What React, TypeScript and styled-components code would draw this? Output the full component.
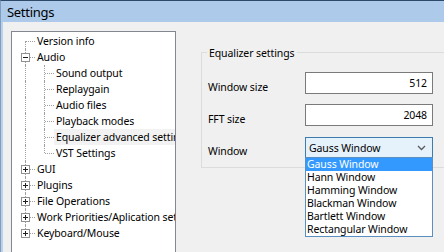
import React, { useState } from 'react';
import styled, { createGlobalStyle, css } from 'styled-components';

const GlobalStyle = createGlobalStyle`
  html, body {
    margin: 0;
    padding: 0;
    background: #f0f0f0;
  }
  body {
    font-family: 'Noto Sans', 'Open Sans', sans-serif;
    font-size: 10.5px;
    letter-spacing: -0.1px;
    color: #000000;
  }
`;

const Window = styled.div`
  width: 444px;
  height: 252px;
  overflow: hidden;
  display: flex;
  flex-direction: column;
  background: #f0f0f0;
  border-top: 1px solid #2e4a68;
  border-left: 1px solid #7f9dbd;
  box-sizing: border-box;
`;

const TitleBar = styled.div`
  height: 21px;
  flex: none;
  display: flex;
  align-items: center;
  padding: 1px 0 0 6px;
  box-sizing: border-box;
  background: #adcaea;
  font-size: 13px;
  letter-spacing: -0.3px;
  color: #000000;
`;

const Body = styled.div`
  flex: 1;
  display: flex;
  flex-direction: row;
  align-items: flex-start;
  gap: 25px;
  padding: 9px 0 0 8px;
  border-left: 2px solid #b9d1ea;
  min-height: 0;
`;

const TreeBox = styled.div`
  flex: none;
  width: 163px;
  height: 240px;
  background: #ffffff;
  border: 1px solid #828790;
  overflow: hidden;
  padding-top: 1px;
`;

const Row = styled.div`
  display: flex;
  align-items: center;
  height: 16px;
  padding-left: 4px;
  white-space: nowrap;
`;

const Cell = styled.div<{ $up?: boolean; $down?: boolean; $right?: boolean }>`
  position: relative;
  flex: none;
  width: 19px;
  height: 16px;

  ${({ $up, $down }) =>
    ($up || $down) &&
    css`
      &::before {
        content: '';
        position: absolute;
        left: 9px;
        top: ${$up ? '0' : '8px'};
        bottom: ${$down ? '0' : '8px'};
        border-left: 1px dotted #a0a0a0;
      }
    `}

  ${({ $right }) =>
    $right &&
    css`
      &::after {
        content: '';
        position: absolute;
        left: 10px;
        right: 0;
        top: 8px;
        border-top: 1px dotted #a0a0a0;
      }
    `}
`;

const Expander = styled.span`
  position: absolute;
  left: 5px;
  top: 4px;
  width: 7px;
  height: 7px;
  border: 1px solid #919191;
  background: #ffffff;
  z-index: 1;

  &::before {
    content: '';
    position: absolute;
    left: 1px;
    right: 1px;
    top: 3px;
    height: 1px;
    background: #1e1e1e;
  }
`;

const PlusExpander = styled(Expander)`
  &::after {
    content: '';
    position: absolute;
    top: 1px;
    bottom: 1px;
    left: 3px;
    width: 1px;
    background: #1e1e1e;
  }
`;

const Label = styled.span<{ $selected?: boolean }>`
  padding: 0 2px;
  line-height: 16px;
  flex: 1;
  ${({ $selected }) =>
    $selected &&
    css`
      background: #f2f2f2;
    `}
`;

const GroupBox = styled.div`
  flex: none;
  width: 260px;
  margin-top: 21px;
  height: 116px;
  border: 1px solid #dcdcdc;
  border-right: none;
  box-sizing: border-box;
`;

const Legend = styled.div`
  width: fit-content;
  margin: -8px 0 0 5px;
  padding: 0 3px 0 2px;
  background: #f0f0f0;
  line-height: 16px;
`;

const Form = styled.div`
  display: grid;
  grid-template-columns: 97px 128px;
  grid-auto-rows: 22px;
  row-gap: 10px;
  align-items: center;
  padding: 1px 0 0 6px;
  margin-top: 10px;
`;

const FieldLabel = styled.div`
  line-height: 16px;
  padding-top: 7px;
`;

const NumberBox = styled.div`
  height: 22px;
  box-sizing: border-box;
  border: 1px solid #7a7a7a;
  background: #ffffff;
  text-align: right;
  padding: 2px 5px 0 0;
  line-height: 16px;
`;

const Combo = styled.div`
  position: relative;
  height: 21px;
  align-self: start;
  margin-top: 1px;
  box-sizing: border-box;
  border: 1px solid #3e7cb0;
  background: #e5f1fb;
  display: flex;
  align-items: center;
  padding-left: 3px;
`;

const ComboText = styled.span`
  flex: 1;
`;

const Chevron = styled.svg`
  width: 9px;
  height: 6px;
  margin-right: 6px;
`;

const DropList = styled.div`
  position: absolute;
  left: -1px;
  top: 19px;
  width: 128px;
  box-sizing: border-box;
  border: 1px solid #5a8fc2;
  background: #ffffff;
  z-index: 5;
`;

const Option = styled.div<{ $active?: boolean }>`
  height: 13px;
  line-height: 13px;
  padding-left: 1px;
  white-space: nowrap;
  ${({ $active }) =>
    $active &&
    css`
      background: #3399ff;
      color: #ffffff;
    `}
`;

type TreeItem = {
  label: string;
  cells: { up?: boolean; down?: boolean; right?: boolean; exp?: 'plus' | 'minus' }[];
  selected?: boolean;
};

const mid = { up: true, down: true, right: true };
const pass = { up: true, down: true };

const treeItems: TreeItem[] = [
  { label: 'Version info', cells: [{ down: true, right: true }] },
  { label: 'Audio', cells: [{ ...mid, exp: 'minus' }] },
  { label: 'Sound output', cells: [pass, mid] },
  { label: 'Replaygain', cells: [pass, mid] },
  { label: 'Audio files', cells: [pass, mid] },
  { label: 'Playback modes', cells: [pass, mid] },
  { label: 'Equalizer advanced settings', cells: [pass, mid], selected: true },
  { label: 'VST Settings', cells: [pass, { up: true, right: true }] },
  { label: 'GUI', cells: [{ ...mid, exp: 'plus' }] },
  { label: 'Plugins', cells: [{ ...mid, exp: 'plus' }] },
  { label: 'File Operations', cells: [{ ...mid, exp: 'plus' }] },
  { label: 'Work Priorities/Aplication settings', cells: [{ ...mid, exp: 'plus' }] },
  { label: 'Keyboard/Mouse', cells: [{ up: true, right: true, exp: 'plus' }] }
];

const windows = [
  'Gauss Window',
  'Hann Window',
  'Hamming Window',
  'Blackman Window',
  'Bartlett Window',
  'Rectangular Window'
];

export default function App() {
  const [selectedWindow] = useState(0);

  return (
    <>
      <GlobalStyle />
      <Window>
        <TitleBar>Settings</TitleBar>
        <Body>
          <TreeBox>
            {treeItems.map((item, idx) => (
              <Row key={idx}>
                {item.cells.map((c, i) => (
                  <Cell key={i} $up={c.up} $down={c.down} $right={c.right}>
                    {c.exp === 'minus' && <Expander />}
                    {c.exp === 'plus' && <PlusExpander />}
                  </Cell>
                ))}
                <Label $selected={item.selected}>{item.label}</Label>
              </Row>
            ))}
          </TreeBox>
          <GroupBox>
            <Legend>Equalizer settings</Legend>
            <Form>
              <FieldLabel>Window size</FieldLabel>
              <NumberBox>512</NumberBox>
              <FieldLabel>FFT size</FieldLabel>
              <NumberBox>2048</NumberBox>
              <FieldLabel>Window</FieldLabel>
              <Combo>
                <ComboText>{windows[selectedWindow]}</ComboText>
                <Chevron viewBox="0 0 9 6">
                  <path d="M1 1 L4.5 4.5 L8 1" fill="none" stroke="#5a5a5a" strokeWidth="1.3" />
                </Chevron>
                <DropList>
                  {windows.map((w, i) => (
                    <Option key={w} $active={i === selectedWindow}>
                      {w}
                    </Option>
                  ))}
                </DropList>
              </Combo>
            </Form>
          </GroupBox>
        </Body>
      </Window>
    </>
  );
}
